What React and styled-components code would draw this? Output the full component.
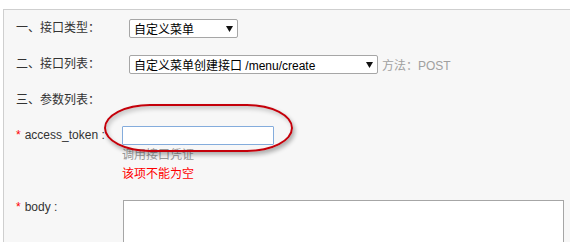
import React from "react";
import styled, { createGlobalStyle } from "styled-components";

const GlobalStyle = createGlobalStyle`
  html, body {
    margin: 0;
    padding: 0;
    background: #fff;
    overflow: hidden;
  }
  body {
    font-family: "Liberation Sans", "Noto Sans CJK SC", sans-serif;
    font-size: 12px;
    color: #333;
  }
`;

const Page = styled.div`
  padding: 9px 0 0 3px;
  width: 570px;
  height: 242px;
  box-sizing: border-box;
  overflow: hidden;
`;

const Panel = styled.div`
  position: relative;
  height: 100%;
  background: #f7f7f7;
  border-top: 1px solid #cfcfcf;
  border-left: 1px solid #cfcfcf;
  padding: 9px 0 0 12px;
  box-sizing: border-box;
  overflow: hidden;
`;

const Row = styled.div`
  display: flex;
  align-items: ${({ top }) => (top ? "flex-start" : "center")};
  margin-top: ${({ gap }) => gap || 0}px;
  min-height: 19px;
`;

const Label = styled.div`
  width: ${({ width }) => width}px;
  flex-shrink: 0;
  line-height: ${({ lh }) => lh || 19}px;
  white-space: nowrap;
  color: #333;
`;

const Star = styled.span`
  color: #f00;
  margin-right: 4px;
`;

const Select = styled.div`
  display: flex;
  align-items: center;
  justify-content: space-between;
  width: ${({ width }) => width}px;
  height: 19px;
  box-sizing: border-box;
  padding: 0 4px;
  background: #fff;
  border: 1px solid #a6a6a6;
  border-radius: 2px;
  color: #000;
  white-space: nowrap;
`;

const Arrow = () => (
  <svg width="7" height="6" viewBox="0 0 7 6">
    <polygon points="0,0 7,0 3.5,6" fill="#111" />
  </svg>
);

const Method = styled.span`
  margin-left: 4px;
  color: #a0a0a0;
`;

const Field = styled.div`
  display: flex;
  flex-direction: column;
`;

const TextInput = styled.div`
  width: 152px;
  height: 19px;
  box-sizing: border-box;
  background: #fff;
  border: 1px solid #84acdc;
  border-radius: 1px;
`;

const Hint = styled.div`
  margin-top: 2px;
  line-height: 17px;
  color: ${({ error }) => (error ? "#f00" : "#999")};
`;

const TextArea = styled.div`
  margin-left: 1px;
  width: 441px;
  height: 80px;
  box-sizing: border-box;
  background: #fff;
  border: 1px solid #a6a6a6;
`;

const Annotation = styled.div`
  position: absolute;
  left: 100px;
  top: 94px;
  width: 189px;
  height: 48px;
  box-sizing: border-box;
  border: 2px solid #c4000a;
  border-radius: 46px / 24px;
  box-shadow: 2px 3px 4px rgba(0, 0, 0, 0.3),
    inset 2px 3px 4px rgba(0, 0, 0, 0.18);
  pointer-events: none;
`;

export default function App() {
  return (
    <>
      <GlobalStyle />
      <Page>
        <Panel>
          <Row>
            <Label width={113}>一、接口类型：</Label>
            <Select width={109}>
              <span>自定义菜单</span>
              <Arrow />
            </Select>
          </Row>
          <Row gap={17}>
            <Label width={113}>二、接口列表：</Label>
            <Select width={249}>
              <span>自定义菜单创建接口 /menu/create</span>
              <Arrow />
            </Select>
            <Method>方法：POST</Method>
          </Row>
          <Row gap={17}>
            <Label width={113}>三、参数列表：</Label>
          </Row>
          <Row gap={16} top>
            <Label width={106}>
              <Star>*</Star>access_token :
            </Label>
            <Field>
              <TextInput />
              <Hint>调用接口凭证</Hint>
              <Hint error>该项不能为空</Hint>
            </Field>
          </Row>
          <Row gap={17} top>
            <Label width={106} lh={15}>
              <Star>*</Star>body :
            </Label>
            <TextArea />
          </Row>
          <Annotation />
        </Panel>
      </Page>
    </>
  );
}
